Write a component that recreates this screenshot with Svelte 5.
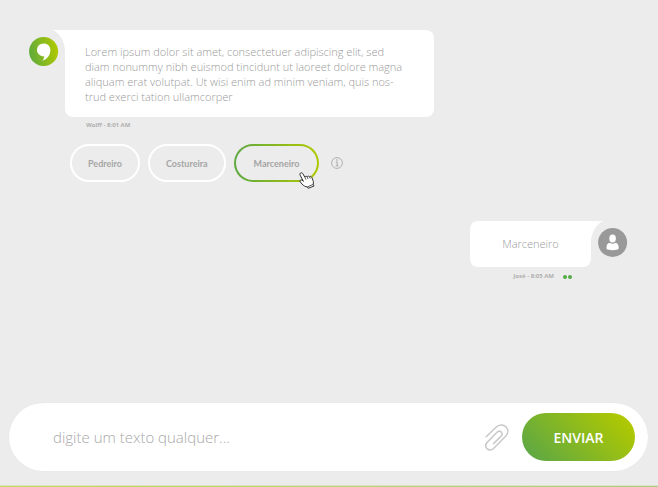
<script>
  let draft = $state('');
  let selected = $state('Marceneiro');
  const options = ['Pedreiro', 'Costureira', 'Marceneiro'];
</script>

<main class="chat">
  <section class="thread">
    <article class="message">
      <svg class="avatar" viewBox="0 0 30 30" role="img" aria-label="Wolff">
        <defs>
          <linearGradient id="brand" x1="0" y1="0.6" x2="1" y2="0.4">
            <stop offset="0" stop-color="#60ab3c" />
            <stop offset="1" stop-color="#b1c900" />
          </linearGradient>
        </defs>
        <circle cx="14.6" cy="15.4" r="14.5" fill="url(#brand)" />
        <path d="M14.6 7.6C10.8 7.6 8 10.4 8 14.1C8 17.8 11 20.4 15.3 20.5C15.2 22 14.4 23.5 13.2 24.8C18.3 23.5 21.4 19.2 21.4 14.1C21.4 10.3 18.4 7.6 14.6 7.6Z" fill="#fff" />
      </svg>
      <div class="content">
        <div class="bubble long">
          <svg class="ear" viewBox="0 0 13 24" aria-hidden="true"><path d="M0 0H13V24H12C12.5 13 8 4 0 0Z" fill="#fff" /></svg>
          <p>
            Lorem ipsum dolor sit amet, consectetuer adipiscing elit, sed<br />
            diam nonummy nibh euismod tincidunt ut laoreet dolore magna<br />
            aliquam erat volutpat. Ut wisi enim ad minim veniam, quis nos-<br />
            trud exerci tation ullamcorper
          </p>
        </div>
        <p class="meta">Wolff - 8:01 AM</p>
        <div class="options">
          {#each options as option}
            <button type="button" class="chip" class:active={selected === option} onclick={() => (selected = option)}>
              {option}
              {#if selected === option}
                <svg class="hand" viewBox="0 0 16 17" aria-hidden="true">
                  <path d="M1.3 1.2C2.2 .3 3.4 .8 3.9 1.8L5.8 5.1C6.2 4.1 7.4 4 8.1 4.9C8.7 3.9 9.8 3.9 10.5 4.8C11.4 4 12.5 4.6 12.9 5.6L14.4 9.5L14.2 12.4L15 14L9.2 16.3L8.3 14.9C6.2 14.7 4.5 13.8 3 12L1.2 9.9C.3 8.5 1.8 7.4 3 8.2L4.4 9.3L1.1 3.1C.7 2.4 .8 1.6 1.3 1.2Z" fill="#fff" stroke="#333" stroke-width="1" stroke-linejoin="round" />
                  <path d="M5.8 5.1L7 7.7M8.1 4.9L9.1 7M10.5 4.8L11.3 6.5M8.3 14.9L14.2 12.4" fill="none" stroke="#333" stroke-width=".8" />
                </svg>
              {/if}
            </button>
          {/each}
          <button type="button" class="plain info" aria-label="Info">
            <svg viewBox="0 0 12 12" width="12" height="12" fill="none" stroke="#aaa">
              <circle cx="6" cy="6" r="5.4" stroke-width=".9" />
              <path d="M4.8 5H6.2V8.7M4.7 8.8H7.5" stroke-width="1" />
              <circle cx="6" cy="3.1" r=".8" fill="#aaa" stroke="none" />
            </svg>
          </button>
        </div>
      </div>
    </article>

    <article class="message own">
      <div class="content">
        <div class="bubble short">
          <p>Marceneiro</p>
          <svg class="ear" viewBox="0 0 13 24" aria-hidden="true"><path d="M13 0H0V24H1C.5 13 5 4 13 0Z" fill="#fff" /></svg>
        </div>
        <p class="meta">José - 8:05 AM <span class="read"><i></i><i></i></span></p>
      </div>
      <svg class="avatar" viewBox="0 0 30 30" role="img" aria-label="José">
        <circle cx="14.6" cy="15.4" r="14.5" fill="#999" />
        <ellipse cx="14.6" cy="11.6" rx="3.3" ry="4" fill="#fff" />
        <path d="M11.9 15.8C13.4 17.1 15.8 17.1 17.3 15.8C19.6 16.2 20.8 18 20.7 20.9C20.7 21.8 20.3 22.3 19.4 22.6C16.4 23.5 12.8 23.5 9.8 22.6C8.9 22.3 8.5 21.8 8.5 20.9C8.4 18 9.6 16.2 11.9 15.8Z" fill="#fff" />
      </svg>
    </article>
  </section>

  <form class="composer" onsubmit={(e) => e.preventDefault()}>
    <input type="text" aria-label="Mensagem" placeholder="digite um texto qualquer..." bind:value={draft} />
    <button type="button" class="plain" aria-label="Anexar">
      <svg viewBox="0 0 24 28" width="24" height="28" fill="none" stroke="#c8c8c8" stroke-width="1.5" stroke-linecap="round" stroke-linejoin="round">
        <path d="M1.2 13.7L11 4.3C14.2 1.2 18.4 1.2 20.9 3.7C23.7 6.5 23.5 10.3 20.6 13.3L9.1 25.1C6.9 27.5 3.9 27.5 2 25.6C.2 23.7 .5 21 2.5 18.9L11.8 9.5C13.2 8 15 7.9 16.2 9C17.4 10.2 17.3 11.9 15.9 13.4L8.5 20.6" />
      </svg>
    </button>
    <button type="submit" class="send">ENVIAR</button>
  </form>
  <div class="rule"></div>
</main>

<style>
  :global(body) {
    margin: 0;
    background: #ececec;
  }
  .chat {
    box-sizing: border-box;
    min-height: 100vh;
    display: flex;
    flex-direction: column;
    padding-top: 30px;
    font-family: "Open Sans", "Noto Sans", sans-serif;
    color: #a9a9a9;
  }
  p {
    margin: 0;
  }
  button {
    font: inherit;
    color: inherit;
    cursor: pointer;
  }
  .thread {
    flex: 1;
    display: flex;
    flex-direction: column;
    gap: 39px;
    padding: 0 30px 0 29px;
  }
  .message {
    display: flex;
    align-items: flex-start;
    gap: 6px;
  }
  .own {
    justify-content: flex-end;
    gap: 7px;
  }
  .avatar {
    flex: none;
    width: 30px;
    height: 30px;
    margin-top: 6px;
  }
  .bubble {
    position: relative;
    box-sizing: border-box;
    background: #fff;
    font-size: 11px;
    font-weight: 300;
    line-height: 15px;
    color: #999;
  }
  .long {
    width: fit-content;
    min-width: 369px;
    padding: 14px 20px 13px;
    border-radius: 0 8px 8px 8px;
  }
  .short {
    min-width: 121px;
    padding: 15px 31px 16px;
    border-radius: 8px 0 8px 8px;
    text-align: center;
  }
  .ear {
    position: absolute;
    top: 0;
    width: 13px;
    height: 24px;
  }
  .long .ear {
    left: -12px;
  }
  .short .ear {
    right: -12px;
  }
  .meta {
    padding: 4px 21px 0;
    font-size: 6px;
    font-weight: 700;
    line-height: 9px;
    color: #b0b0b0;
  }
  .own .meta {
    display: flex;
    justify-content: flex-end;
    gap: 9px;
    padding-top: 5px;
    padding-right: 19px;
  }
  .read {
    display: flex;
    align-items: center;
    gap: 1px;
  }
  .read i {
    width: 4px;
    height: 4px;
    border-radius: 50%;
    background: #55aa46;
  }
  .options {
    display: flex;
    align-items: center;
    gap: 8px;
    padding: 14px 0 0 5px;
  }
  .chip {
    position: relative;
    height: 38px;
    padding: 0 16px;
    border: 2px solid #fff;
    border-radius: 19px;
    background: #ececec;
    font-family: Lato, "Open Sans", sans-serif;
    font-size: 9px;
    font-weight: 700;
    color: #a5a5a5;
  }
  .active {
    padding: 0 18px;
    border-color: transparent;
    background: linear-gradient(#ececec, #ececec) padding-box, linear-gradient(90deg, #5fa843, #b1c900) border-box;
  }
  .hand {
    position: absolute;
    right: 2px;
    bottom: -9px;
    width: 16px;
    height: 17px;
  }
  .plain {
    display: flex;
    padding: 0;
    border: 0;
    background: none;
  }
  .info {
    margin-left: 4px;
  }
  .composer {
    display: flex;
    align-items: center;
    gap: 13px;
    margin: 0 10px 14px 9px;
    padding: 10px 13px 10px 44px;
    border-radius: 34px;
    background: #fff;
    box-shadow: 0 0 1px #ddd;
  }
  .rule {
    height: 1px;
    background: linear-gradient(90deg, #c5da5c, #a8d084);
    border-top: 1px solid #dce3c4;
  }
  input {
    flex: 1;
    min-width: 0;
    padding: 0;
    border: 0;
    outline: 0;
    background: none;
    font: 300 15px "Open Sans", "Noto Sans", sans-serif;
    color: #999;
  }
  input::placeholder {
    color: #a8a8a8;
    opacity: 1;
  }
  .send {
    min-width: 113px;
    height: 48px;
    padding: 0 31px;
    border: 0;
    border-radius: 24px;
    background: linear-gradient(45deg, #5fa843 8%, #b1c900 92%);
    color: #fff;
    font-size: 14px;
    font-weight: 600;
  }
</style>
